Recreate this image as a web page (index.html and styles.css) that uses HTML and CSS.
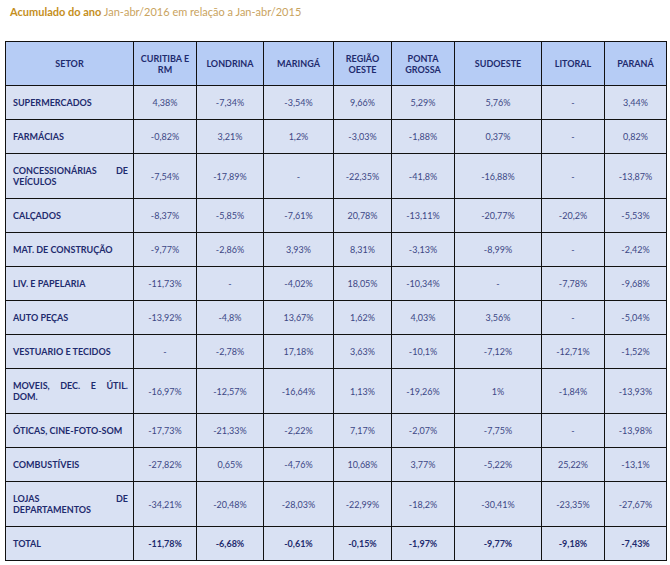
FILE: index.html
```html
<!DOCTYPE html>
<html lang="pt-BR">
<head>
<meta charset="utf-8">
<title>Acumulado do ano</title>
<link rel="stylesheet" href="styles.css">
</head>
<body>
<p class="title"><b>Acumulado do ano</b> Jan-abr/2016 em relação a Jan-abr/2015</p>
<table class="data">
<colgroup>
<col class="c-setor"><col class="c1"><col class="c2"><col class="c3"><col class="c4"><col class="c5"><col class="c6"><col class="c7"><col class="c8">
</colgroup>
<thead>
<tr><th>SETOR</th><th>CURITIBA E RM</th><th>LONDRINA</th><th>MARINGÁ</th><th>REGIÃO OESTE</th><th>PONTA GROSSA</th><th>SUDOESTE</th><th>LITORAL</th><th>PARANÁ</th></tr>
</thead>
<tbody>
<tr><td class="s">SUPERMERCADOS</td><td>4,38%</td><td>-7,34%</td><td>-3,54%</td><td>9,66%</td><td>5,29%</td><td>5,76%</td><td>-</td><td>3,44%</td></tr>
<tr><td class="s">FARMÁCIAS</td><td>-0,82%</td><td>3,21%</td><td>1,2%</td><td>-3,03%</td><td>-1,88%</td><td>0,37%</td><td>-</td><td>0,82%</td></tr>
<tr class="tall"><td class="s">CONCESSIONÁRIAS DE VEÍCULOS</td><td>-7,54%</td><td>-17,89%</td><td>-</td><td>-22,35%</td><td>-41,8%</td><td>-16,88%</td><td>-</td><td>-13,87%</td></tr>
<tr><td class="s">CALÇADOS</td><td>-8,37%</td><td>-5,85%</td><td>-7,61%</td><td>20,78%</td><td>-13,11%</td><td>-20,77%</td><td>-20,2%</td><td>-5,53%</td></tr>
<tr><td class="s">MAT. DE CONSTRUÇÃO</td><td>-9,77%</td><td>-2,86%</td><td>3,93%</td><td>8,31%</td><td>-3,13%</td><td>-8,99%</td><td>-</td><td>-2,42%</td></tr>
<tr><td class="s">LIV. E PAPELARIA</td><td>-11,73%</td><td>-</td><td>-4,02%</td><td>18,05%</td><td>-10,34%</td><td>-</td><td>-7,78%</td><td>-9,68%</td></tr>
<tr><td class="s">AUTO PEÇAS</td><td>-13,92%</td><td>-4,8%</td><td>13,67%</td><td>1,62%</td><td>4,03%</td><td>3,56%</td><td>-</td><td>-5,04%</td></tr>
<tr><td class="s">VESTUARIO E TECIDOS</td><td>-</td><td>-2,78%</td><td>17,18%</td><td>3,63%</td><td>-10,1%</td><td>-7,12%</td><td>-12,71%</td><td>-1,52%</td></tr>
<tr class="tall"><td class="s">MOVEIS, DEC. E ÚTIL. DOM.</td><td>-16,97%</td><td>-12,57%</td><td>-16,64%</td><td>1,13%</td><td>-19,26%</td><td>1%</td><td>-1,84%</td><td>-13,93%</td></tr>
<tr><td class="s">ÓTICAS, CINE-FOTO-SOM</td><td>-17,73%</td><td>-21,33%</td><td>-2,22%</td><td>7,17%</td><td>-2,07%</td><td>-7,75%</td><td>-</td><td>-13,98%</td></tr>
<tr><td class="s">COMBUSTÍVEIS</td><td>-27,82%</td><td>0,65%</td><td>-4,76%</td><td>10,68%</td><td>3,77%</td><td>-5,22%</td><td>25,22%</td><td>-13,1%</td></tr>
<tr class="tall"><td class="s">LOJAS DE DEPARTAMENTOS</td><td>-34,21%</td><td>-20,48%</td><td>-28,03%</td><td>-22,99%</td><td>-18,2%</td><td>-30,41%</td><td>-23,35%</td><td>-27,67%</td></tr>
<tr class="total"><td class="s">TOTAL</td><td>-11,78%</td><td>-6,68%</td><td>-0,61%</td><td>-0,15%</td><td>-1,97%</td><td>-9,77%</td><td>-9,18%</td><td>-7,43%</td></tr>
</tbody>
</table>
</body>
</html>
```

FILE: styles.css
```css
html, body {
  margin: 0;
  padding: 0;
  background: #ffffff;
}
body {
  padding: 0 0 0 5px;
  font-family: Lato, "Liberation Sans", Arial, sans-serif;
}
.title {
  margin: 0;
  padding: 5px 0 0 5px;
  height: 41px;
  box-sizing: border-box;
  font-size: 11px;
  line-height: 14px;
  color: #c9a35e;
}
.title b {
  color: #c58f1c;
  font-weight: 700;
}
.data {
  border-collapse: collapse;
  table-layout: fixed;
  width: 661px;
  font-size: 9px;
  color: #3c4785;
}
.c-setor { width: 128px; }
.c1 { width: 63px; }
.c2 { width: 67px; }
.c3 { width: 70px; }
.c4 { width: 58px; }
.c5 { width: 63px; }
.c6 { width: 87px; }
.c7 { width: 63px; }
.c8 { width: 62px; }
.data th, .data td {
  border: 1px solid #111111;
  padding: 0 4px;
  text-align: center;
  vertical-align: middle;
  line-height: 11px;
}
.data th {
  background: #b6ccf5;
  color: #1e2b6e;
  font-weight: 700;
  height: 43px;
}
.data td {
  background: #d9e1f3;
  height: 33px;
}
.data tr.tall td {
  height: 44px;
}
.data td.s {
  text-align: justify;
  padding: 0 5px 0 7px;
  font-weight: 700;
  color: #1e2b6e;
}
.data tr.total td {
  font-weight: 700;
  color: #1e2b6e;
}
```
